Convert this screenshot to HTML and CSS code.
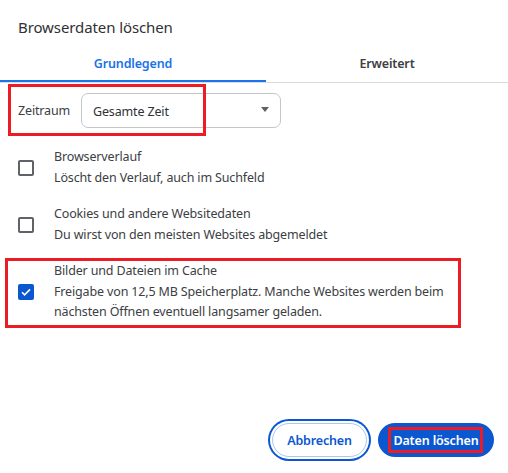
FILE: index.html
```html
<!DOCTYPE html>
<html lang="de">
<head>
<meta charset="utf-8">
<link rel="stylesheet" href="styles.css">
</head>
<body>
<div class="dialog">
  <div class="title">Browserdaten löschen</div>
  <div class="tabs">
    <div class="tab active">Grundlegend</div>
    <div class="tab">Erweitert</div>
  </div>
  <div class="range">
    <span class="range-label">Zeitraum</span>
    <div class="select">
      <span>Gesamte Zeit</span>
      <svg class="arrow" width="8" height="5" viewBox="0 0 8 5"><path d="M0 0h8L4 5z" fill="#5f6368"/></svg>
    </div>
    <div class="mark mark-range"></div>
  </div>
  <div class="items">
    <div class="item">
      <span class="cb"></span>
      <div class="texts">
        <div class="t1">Browserverlauf</div>
        <div class="t2">Löscht den Verlauf, auch im Suchfeld</div>
      </div>
    </div>
    <div class="item">
      <span class="cb"></span>
      <div class="texts">
        <div class="t1">Cookies und andere Websitedaten</div>
        <div class="t2">Du wirst von den meisten Websites abgemeldet</div>
      </div>
    </div>
    <div class="item">
      <span class="cb checked"><svg width="16" height="16" viewBox="0 0 16 16"><path d="M4 8.2l2.6 2.6L12 5.4" fill="none" stroke="#fff" stroke-width="1.6"/></svg></span>
      <div class="texts">
        <div class="t1">Bilder und Dateien im Cache</div>
        <div class="t2">Freigabe von 12,5 MB Speicherplatz. Manche Websites werden beim nächsten Öffnen eventuell langsamer geladen.</div>
      </div>
      <div class="mark mark-cache"></div>
    </div>
  </div>
  <div class="actions">
    <button class="btn btn-cancel">Abbrechen</button>
    <button class="btn btn-primary">Daten löschen<span class="mark mark-btn"></span></button>
  </div>
</div>
</body>
</html>
```
FILE: styles.css
```css
* { box-sizing: border-box; }
html, body { margin: 0; padding: 0; background: #fff; }
body {
  width: 508px;
  height: 473px;
  overflow: hidden;
  font-family: "Noto Sans", "Open Sans", sans-serif;
  font-size: 12.5px;
  letter-spacing: -0.15px;
  color: #3c4043;
}
.dialog {
  height: 473px;
  display: flex;
  flex-direction: column;
}
.title {
  font-size: 15px;
  letter-spacing: -0.1px;
  line-height: 20px;
  color: #303134;
  padding: 17px 18px 0;
  height: 44px;
}
.tabs {
  display: flex;
  border-bottom: 1px solid #dadce0;
  height: 39px;
}
.tab {
  width: 266px;
  flex: none;
  display: flex;
  align-items: center;
  justify-content: center;
  font-weight: 600;
  font-size: 12.5px;
  color: #3c4043;
  height: 38px;
}
.tab + .tab { flex: 1; width: auto; }
.tab.active {
  color: #1a73e8;
  border-bottom: 2px solid #1a73e8;
  padding-top: 2px;
}
.range {
  position: relative;
  display: flex;
  align-items: center;
  padding: 10px 18px 0;
}
.range-label {
  width: 63px;
  color: #3c4043;
  line-height: 20px;
}
.select {
  width: 200px;
  height: 35px;
  border: 1px solid #c4c7c5;
  border-radius: 7px;
  display: flex;
  align-items: center;
  justify-content: space-between;
  padding: 2px 11px 0 11px;
  color: #303134;
}
.arrow { margin-bottom: 4px; }
.mark {
  position: absolute;
  border: 3px solid #ec1c24;
  pointer-events: none;
}
.mark-range { left: 8px; top: 1px; width: 198px; height: 52px; }
.items {
  padding: 19px 0 0 18px;
  display: flex;
  flex-direction: column;
  gap: 16px;
}
.item {
  position: relative;
  display: flex;
  align-items: center;
}
.cb {
  flex: none;
  width: 16px;
  height: 16px;
  border: 2px solid #5f6368;
  border-radius: 2px;
  margin-right: 20px;
  display: flex;
}
.cb.checked {
  background: #0b57d0;
  border: none;
}
.texts { line-height: 20.5px; width: 420px; }
.mark-cache { left: -13px; top: -3px; width: 456px; height: 70px; }
.actions {
  margin-top: auto;
  display: flex;
  justify-content: flex-end;
  align-items: center;
  gap: 11px;
  padding: 0 14px 16px 0;
}
.btn {
  font-family: inherit;
  font-size: 12.5px;
  letter-spacing: -0.15px;
  font-weight: 600;
  height: 34px;
  border-radius: 17px;
  padding: 0;
  cursor: pointer;
}
.btn-cancel {
  width: 95px;
  background: #fff;
  color: #0b57d0;
  border: 1px solid #a8c7fa;
  box-shadow: 0 0 0 2px #fff, 0 0 0 4px #0b57d0;
}
.btn-primary {
  position: relative;
  width: 116px;
  background: #0b57d0;
  color: #fff;
  border: none;
}
.mark-btn { left: 10px; top: 4px; width: 95px; height: 26px; }
```
